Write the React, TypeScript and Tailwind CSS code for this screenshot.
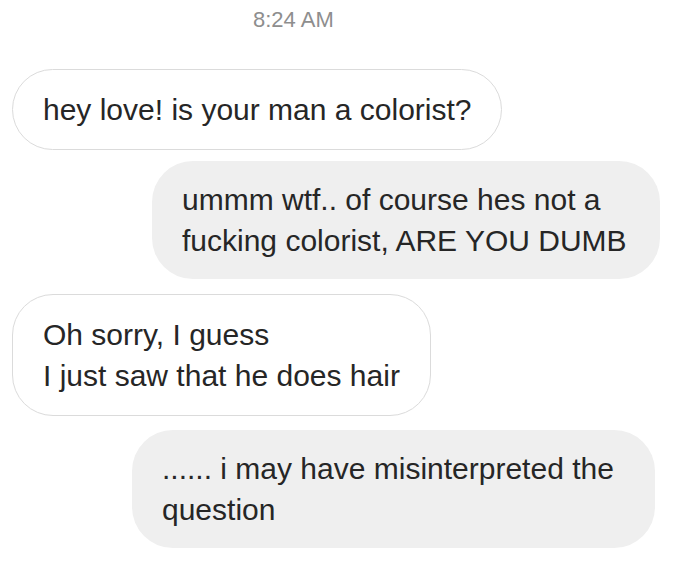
import React from 'react';

type Msg = { side: 'in' | 'out'; lines: string[]; width: string; gap: string; edge: string };

const messages: Msg[] = [
  { side: 'in', lines: ['hey love! is your man a colorist?'], width: 'w-[490px]', gap: 'mt-[37px]', edge: 'ml-[12px]' },
  { side: 'out', lines: ['ummm wtf.. of course hes not a', 'fucking colorist, ARE YOU DUMB'], width: 'w-[508px]', gap: 'mt-[11px]', edge: 'mr-[20px]' },
  { side: 'in', lines: ['Oh sorry, I guess', 'I just saw that he does hair'], width: 'w-[419px]', gap: 'mt-[15px]', edge: 'ml-[12px]' },
  { side: 'out', lines: ['...... i may have misinterpreted the', 'question'], width: 'w-[523px]', gap: 'mt-[14px]', edge: 'mr-[25px]' },
];

const Bubble: React.FC<{ msg: Msg }> = ({ msg }) => {
  const base = 'rounded-[41px] px-[30px] text-[30px] leading-[41px] text-[#262626] whitespace-nowrap';
  const look =
    msg.side === 'in'
      ? 'bg-white border-[1.5px] border-[#dbdbdb] py-[19px] self-start'
      : 'bg-[#efefef] py-[18px] self-end';
  return (
    <div className={`${base} ${look} ${msg.width} ${msg.gap} ${msg.edge}`}>
      {msg.lines.map((l, i) => (
        <div key={i}>{l}</div>
      ))}
    </div>
  );
};

export default function App() {
  return (
    <div
      className="w-[680px] h-[561px] bg-white flex flex-col overflow-hidden"
      style={{ fontFamily: '"Liberation Sans", Arial, sans-serif' }}
    >
      {/* timestamp */}
      <div className="pt-2 ml-[253px] text-[22px] leading-[24px] text-[#8e8e8e]">8:24 AM</div>

      {messages.map((m, i) => (
        <Bubble key={i} msg={m} />
      ))}
    </div>
  );
}
